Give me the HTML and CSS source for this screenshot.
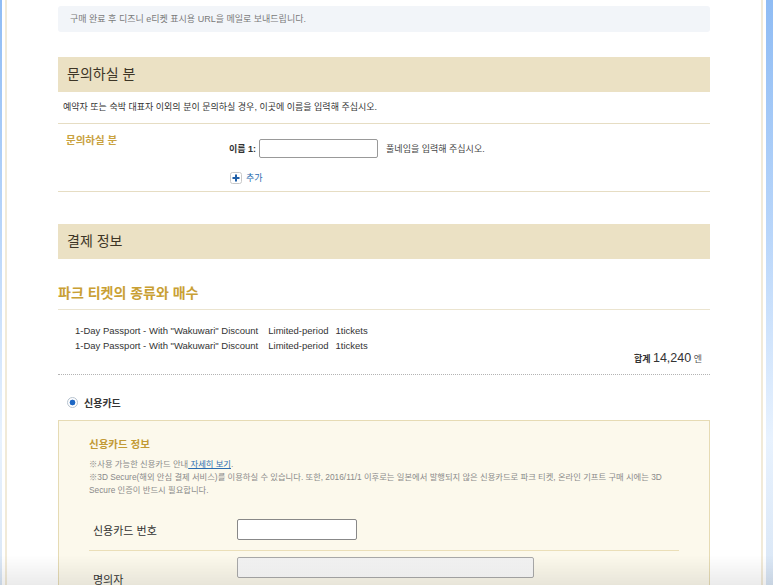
FILE: index.html
```html
<!DOCTYPE html>
<html lang="ko">

<head>
    <meta charset="UTF-8">
    <meta name="viewport" content="width=device-width, initial-scale=1.0">
    <title>결제 정보</title>
    <link rel="stylesheet" href="styles.css">
</head>

<body>
    <div class="page">
        <div class="frame">
            <div class="content">

                <div class="notice">구매 완료 후 디즈니 e티켓 표시용 URL을 메일로 보내드립니다.</div>

                <!-- 문의하실 분 -->
                <h2 class="band">문의하실 분</h2>
                <p class="band-desc">예약자 또는 숙박 대표자 이외의 분이 문의하실 경우, 이곳에 이름을 입력해 주십시오.</p>

                <div class="contact-row">
                    <div class="contact-label">문의하실 분</div>
                    <div class="contact-body">
                        <div class="name-line">
                            <label class="name-label">이름 1:</label>
                            <input type="text" class="name-input">
                            <span class="name-hint">풀네임을 입력해 주십시오.</span>
                        </div>
                        <a class="add-link" href="#">
                            <span class="add-icon">
                                <svg width="12" height="12" viewBox="0 0 12 12">
                                    <rect x="0.5" y="0.5" width="11" height="11" rx="2" fill="#fff" stroke="#c9c9c9" />
                                    <path d="M6 2.5v7M2.5 6h7" stroke="#1f5fa8" stroke-width="2" />
                                </svg>
                            </span>
                            추가
                        </a>
                    </div>
                </div>

                <!-- 결제 정보 -->
                <h2 class="band band-pay">결제 정보</h2>

                <h3 class="sub-title">파크 티켓의 종류와 매수</h3>
                <ul class="ticket-list">
                    <li>1-Day Passport - With "Wakuwari" Discount<span class="gap"></span>Limited-period<span class="gap2"></span>1tickets</li>
                    <li>1-Day Passport - With "Wakuwari" Discount<span class="gap"></span>Limited-period<span class="gap2"></span>1tickets</li>
                </ul>
                <div class="total"><b>합계</b> <span class="total-num">14,240</span> <span class="yen">엔</span></div>

                <div class="pay-option">
                    <span class="radio"></span>
                    <span class="pay-name">신용카드</span>
                </div>

                <div class="card-box">
                    <h4 class="card-title">신용카드 정보</h4>
                    <p class="card-note">※사용 가능한 신용카드 안내<a href="#"> 자세히 보기</a>.</p>
                    <p class="card-note">※3D Secure(해외 안심 결제 서비스)를 이용하실 수 있습니다. 또한, 2016/11/1 이후로는 일본에서 발행되지 않은 신용카드로 파크 티켓, 온라인 기프트 구매 시에는 3D Secure 인증이 반드시 필요합니다.</p>

                    <div class="card-form">
                        <div class="card-field">
                            <span class="field-label">신용카드 번호</span>
                            <input type="text" class="card-input">
                        </div>
                        <div class="card-field field-holder">
                            <span class="field-label">명의자</span>
                            <input type="text" class="card-input wide">
                        </div>
                    </div>
                </div>

            </div>
        </div>
    </div>
    <div class="bottom-shade"></div>
</body>

</html>
```

FILE: styles.css
```css
* {
    box-sizing: border-box;
}

body {
    margin: 0;
    height: 585px;
    overflow: hidden;
    font-family: "Liberation Sans", "Noto Sans CJK KR", sans-serif;
    color: #333;
    background: linear-gradient(180deg, #8fbcf4 0%, #b9d6fa 40%, #e8f2fe 75%, #d9e6f5 100%);
}

.page {
    margin: 0 7px 0 2px;
    padding: 0 3px;
    background: #fff;
    height: 585px;
    overflow: hidden;
}

.frame {
    border-left: 2px solid #f1ead8;
    border-right: 2px solid #f1ead8;
    min-height: 585px;
    background: #fff;
}

.content {
    width: 652px;
    margin-left: 51px;
    padding-top: 6px;
}

/* notice */

.notice {
    height: 26px;
    line-height: 26px;
    padding-left: 12px;
    background: #f2f5f9;
    border-radius: 3px;
    font-size: 9px;
    color: #7a7a7a;
}

/* beige bands */

.band {
    margin: 25px 0 0;
    height: 35px;
    line-height: 35px;
    padding-left: 9px;
    background: #ebe1c4;
    font-size: 14px;
    font-weight: normal;
    color: #3d3526;
}

.band-pay {
    margin-top: 32px;
}

.band-desc {
    margin: 0;
    height: 32px;
    line-height: 30px;
    padding-left: 5px;
    font-size: 9px;
    color: #333;
    border-bottom: 1px solid #e6ddc3;
}

.contact-row {
    display: flex;
    height: 68px;
    border-bottom: 1px solid #e6ddc3;
}

.contact-label {
    width: 171px;
    padding: 8px 0 0 8px;
    font-size: 10.5px;
    font-weight: bold;
    color: #c9a23f;
}

.contact-body {
    padding-top: 15px;
}

.name-line {
    display: flex;
    align-items: center;
    font-size: 9px;
}

.name-label {
    font-weight: bold;
    color: #333;
    margin-right: 3px;
}

.name-input {
    width: 119px;
    height: 19px;
    border: 1px solid #999;
    border-radius: 2px;
    margin: 0;
}

.name-hint {
    margin-left: 8px;
    color: #444;
}

.add-link {
    display: flex;
    align-items: center;
    gap: 4px;
    margin-top: 13px;
    margin-left: 1px;
    font-size: 9px;
    color: #2b6cb0;
    text-decoration: none;
}

.add-icon svg {
    display: block;
}

/* tickets */

.sub-title {
    margin: 0;
    padding: 25px 0 6px;
    line-height: 19px;
    font-size: 14px;
    color: #c9a033;
    border-bottom: 1px solid #ebe4cf;
}

.ticket-list {
    list-style: none;
    margin: 13px 0 0;
    padding-left: 17px;
    font-size: 9.5px;
    line-height: 15px;
    color: #333;
}

.gap {
    display: inline-block;
    width: 10px;
}

.gap2 {
    display: inline-block;
    width: 7px;
}

.total {
    margin-top: -3px;
    text-align: right;
    padding: 0 8px 7px 0;
    line-height: 16px;
    font-size: 9px;
    color: #333;
    border-bottom: 1px dotted #b3b3b3;
}

.total-num {
    font-size: 12.5px;
}

.yen {
    color: #555;
}

/* payment option */

.pay-option {
    display: flex;
    align-items: center;
    gap: 6px;
    padding: 10px 0 0 9px;
    height: 45px;
    font-size: 10px;
    font-weight: bold;
}

.radio {
    width: 11px;
    height: 11px;
    border-radius: 50%;
    border: 1px solid #b7c3cf;
    background: radial-gradient(circle, #1e67c4 0 2.6px, #fff 3.2px);
}

/* credit card box */

.card-box {
    background: #fcf9ec;
    border: 1px solid #e6dbb4;
    padding: 16px 36px 0 30px;
    height: 200px;
}

.card-title {
    margin: 0 0 7px;
    font-size: 10.5px;
    line-height: 14px;
    color: #c29a35;
}

.card-note {
    margin: 0;
    font-size: 8.3px;
    line-height: 13px;
    color: #8a8a8a;
}

.card-note a {
    color: #2b6cb0;
}

.card-form {
    margin-top: 12px;
    margin-right: -6px;
}

.card-field {
    display: flex;
    align-items: center;
    height: 42px;
    border-bottom: 1px solid #ebdfb8;
}

.field-holder {
    border-bottom: none;
    align-items: flex-start;
    padding-top: 6px;
}

.field-holder .field-label {
    padding-top: 14px;
}

.field-label {
    width: 148px;
    padding-left: 4px;
    font-size: 11px;
    color: #333;
}

.card-input {
    width: 120px;
    height: 21px;
    margin: 0;
    border: 1px solid #888;
    border-radius: 2px;
    background: #fff;
}

.card-input.wide {
    width: 297px;
    background: linear-gradient(#f2f2f2, #fcfcfc);
    border-color: #aaa;
}

.bottom-shade {
    position: fixed;
    left: 0;
    right: 0;
    bottom: 0;
    height: 30px;
    pointer-events: none;
    background: linear-gradient(180deg, rgba(0, 0, 0, 0) 0%, rgba(0, 0, 0, 0.08) 100%);
}
```
